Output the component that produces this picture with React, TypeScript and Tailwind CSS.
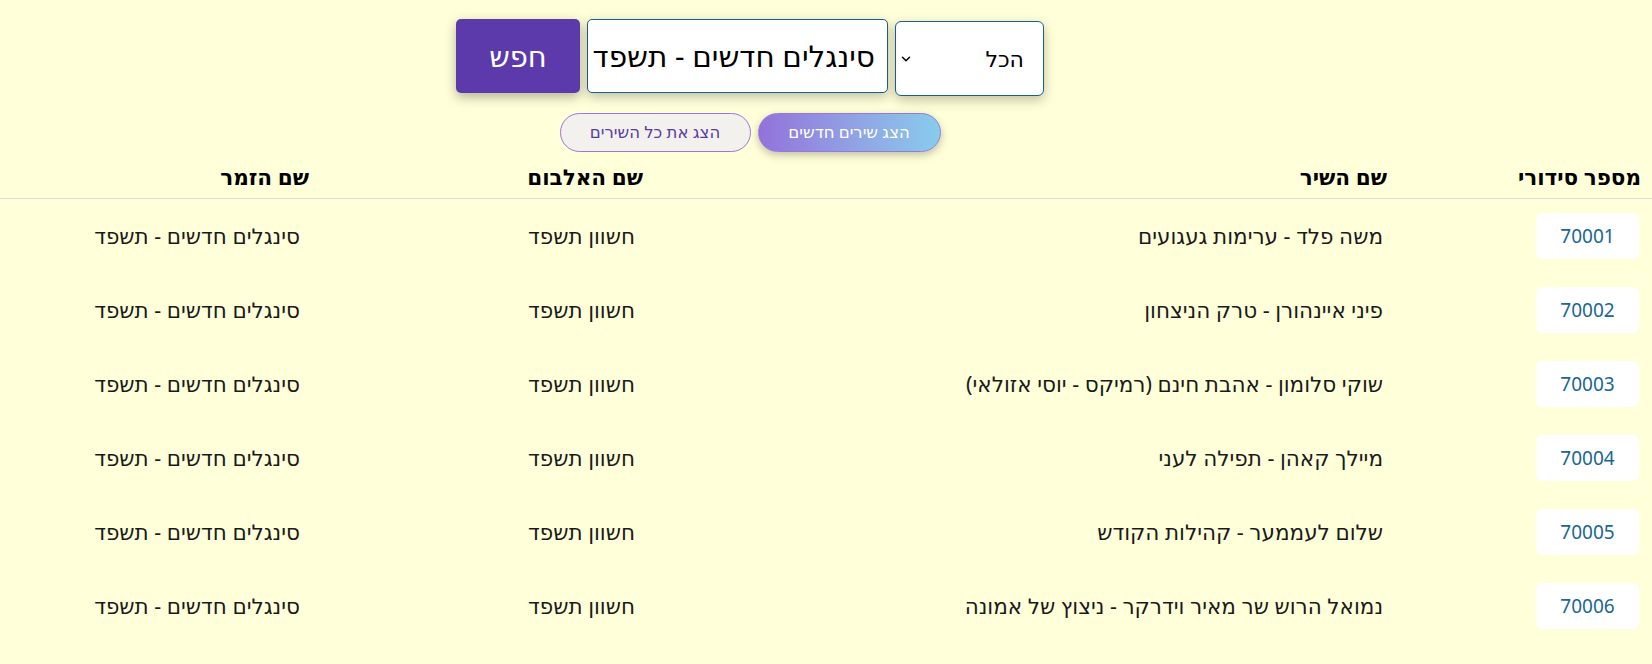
import { ChevronDown } from "lucide-react";

const songs = [
  { id: 70001, name: "משה פלד - ערימות געגועים" },
  { id: 70002, name: "פיני איינהורן - טרק הניצחון" },
  { id: 70003, name: "שוקי סלומון - אהבת חינם (רמיקס - יוסי אזולאי)" },
  { id: 70004, name: "מיילך קאהן - תפילה לעני" },
  { id: 70005, name: "שלום לעממער - קהילות הקודש" },
  { id: 70006, name: "נמואל הרוש שר מאיר וידרקר - ניצוץ של אמונה" },
];

const App = () => {
  return (
    <div
      dir="rtl"
      className="min-h-screen w-full bg-[#ffffd9] text-black"
      style={{ fontFamily: '"Noto Sans", "DejaVu Sans", sans-serif' }}
    >
      {/* Search controls */}
      <div className="w-[1500px] mr-auto flex flex-col items-center pt-[19px]">
        <div className="flex items-start gap-[7px]">
          <div className="mt-[2px] w-[149px] h-[75px] bg-white border border-[#1d5f8c] rounded-[6px] shadow-[0_4px_12px_rgba(0,0,0,0.25)] flex items-center justify-between pr-[19px] pl-[3px]">
            <span className="text-[22px]">הכל</span>
            <ChevronDown className="w-[14px] h-[14px]" strokeWidth={2.5} />
          </div>
          <div className="w-[301px] h-[74px] bg-white border border-[#1d5f8c] rounded-[5px] shadow-[0_4px_12px_rgba(0,0,0,0.25)] flex items-center px-[12px]">
            <span className="text-[29.5px] whitespace-nowrap">סינגלים חדשים - תשפד</span>
          </div>
          <button className="w-[124px] h-[74px] bg-[#5d3aac] text-white text-[29px] rounded-[5px] shadow-[0_4px_12px_rgba(0,0,0,0.3)]">
            חפש
          </button>
        </div>
        <div className="flex gap-[7px] mt-[17px]">
          <button className="w-[183px] h-[39px] rounded-full border border-[#9a78d8] bg-gradient-to-l from-[#88ccec] to-[#9272da] text-white text-[16.5px] shadow-[0_3px_8px_rgba(0,0,0,0.25)]">
            הצג שירים חדשים
          </button>
          <button className="w-[191px] h-[39px] rounded-full border border-[#9a78d8] bg-[#f2f1ee] text-[#5a3ba4] text-[16.5px]">
            הצג את כל השירים
          </button>
        </div>
      </div>

      {/* Table */}
      <div className="mt-[4px]">
        <div className="grid grid-cols-[254px_744px_334px_320px] h-[43px] items-center border-b border-[#dcdcdc] text-[21.5px] font-bold">
          <div className="pr-[11px]">מספר סידורי</div>
          <div className="pr-[11px]">שם השיר</div>
          <div className="pr-[11px]">שם האלבום</div>
          <div className="pr-[11px]">שם הזמר</div>
        </div>
        {songs.map((song) => (
          <div
            key={song.id}
            className="grid grid-cols-[254px_744px_334px_320px] h-[74px] items-center text-[21.5px] text-[#1a1a1a]"
          >
            <div className="pr-[13px]">
              <div className="w-[103px] h-[46px] bg-white rounded-[6px] flex items-center justify-center text-[19px] text-[#1a6694]">
                {song.id}
              </div>
            </div>
            <div className="pr-[15px]">{song.name}</div>
            <div className="pr-[19px]">חשוון תשפד</div>
            <div className="pr-[20px]">סינגלים חדשים - תשפד</div>
          </div>
        ))}
      </div>
    </div>
  );
};

export default App;
